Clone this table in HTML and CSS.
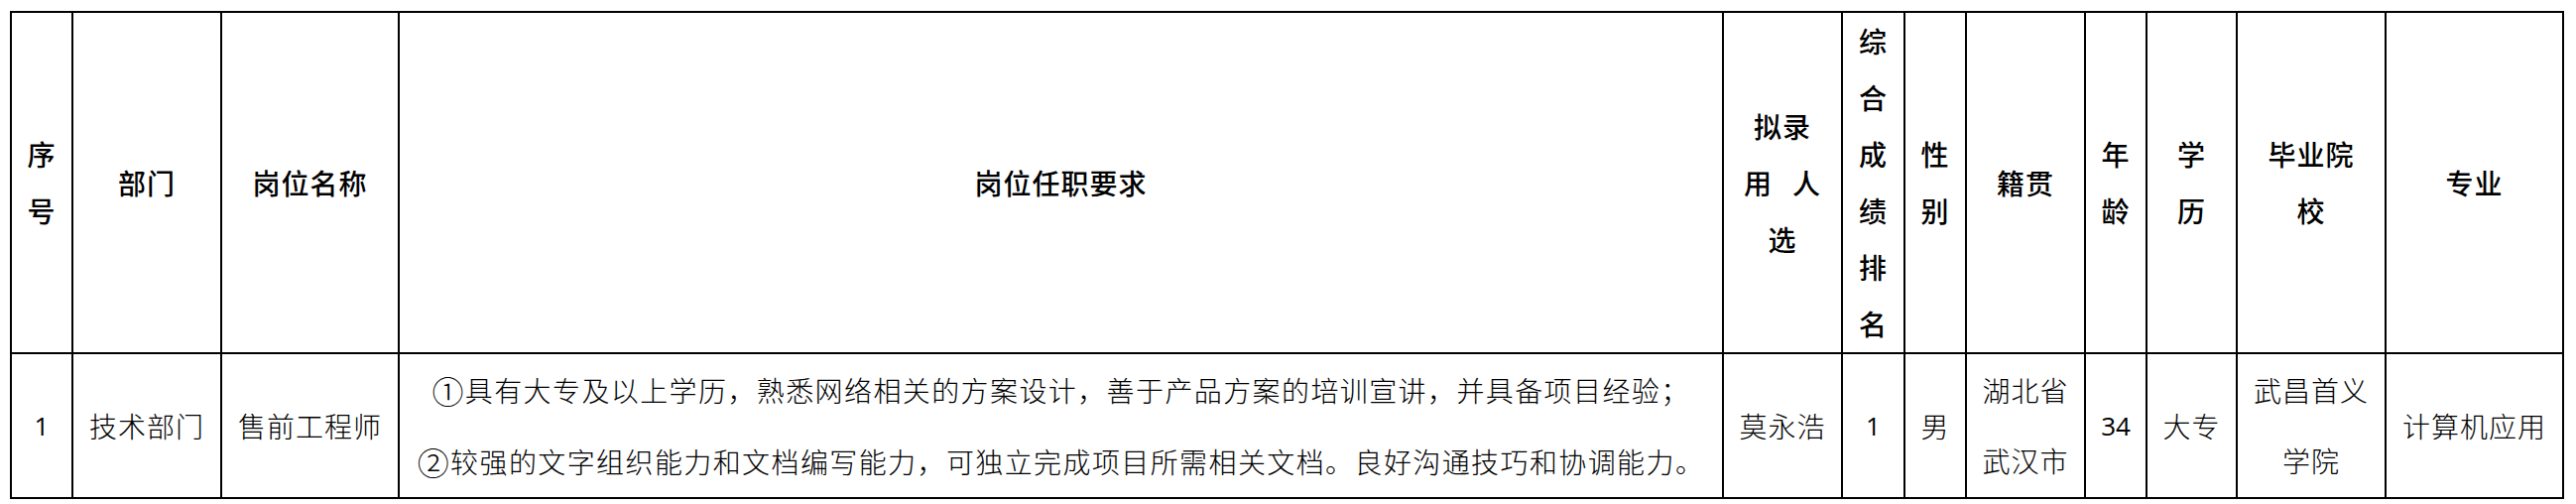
FILE: index.html
```html
<!DOCTYPE html>
<html lang="zh-CN">
<head>
<meta charset="utf-8">
<title>拟录用人员公示</title>
<link rel="stylesheet" href="styles.css">
</head>
<body>
<table class="sheet">
  <colgroup>
    <col class="c-no">
    <col class="c-dept">
    <col class="c-post">
    <col class="c-req">
    <col class="c-name">
    <col class="c-rank">
    <col class="c-sex">
    <col class="c-home">
    <col class="c-age">
    <col class="c-edu">
    <col class="c-school">
    <col class="c-major">
  </colgroup>
  <thead>
    <tr class="head">
      <th>序<br>号</th>
      <th>部门</th>
      <th>岗位名称</th>
      <th>岗位任职要求</th>
      <th>拟录<br><span class="gap">用</span>人<br>选</th>
      <th>综<br>合<br>成<br>绩<br>排<br>名</th>
      <th>性<br>别</th>
      <th>籍贯</th>
      <th>年<br>龄</th>
      <th>学<br>历</th>
      <th>毕业院<br>校</th>
      <th>专业</th>
    </tr>
  </thead>
  <tbody>
    <tr class="row">
      <td class="num">1</td>
      <td>技术部门</td>
      <td>售前工程师</td>
      <td class="req"><span class="mark">①</span>具有大专及以上学历，熟悉网络相关的方案设计，善于产品方案的培训宣讲，并具备项目经验；<br><span class="mark">②</span>较强的文字组织能力和文档编写能力，可独立完成项目所需相关文档。良好沟通技巧和协调能力。</td>
      <td>莫永浩</td>
      <td class="num">1</td>
      <td>男</td>
      <td>湖北省<br>武汉市</td>
      <td class="num">34</td>
      <td>大专</td>
      <td>武昌首义<br>学院</td>
      <td>计算机应用</td>
    </tr>
  </tbody>
</table>
</body>
</html>
```

FILE: styles.css
```css
html, body {
  background: #ffffff;
}

body {
  margin: 0;
  padding: 11px 0 0 10px;
  color: #000000;
  font-family: "Noto Sans CJK SC", "Noto Sans", sans-serif;
}

.sheet {
  border-collapse: collapse;
  table-layout: fixed;
  width: 2575px;
}

.c-no { width: 62px; }
.c-dept { width: 150px; }
.c-post { width: 179px; }
.c-req { width: 1335px; }
.c-name { width: 120px; }
.c-rank { width: 63px; }
.c-sex { width: 62px; }
.c-home { width: 120px; }
.c-age { width: 62px; }
.c-edu { width: 91px; }
.c-school { width: 150px; }
.c-major { width: 179px; }

.sheet th,
.sheet td {
  border: 2px solid #000000;
  padding: 0;
  text-align: center;
  vertical-align: middle;
  font-size: 28px;
  white-space: nowrap;
}

.head th {
  height: 342px;
  line-height: 57px;
  font-weight: 500;
  letter-spacing: 1px;
}

.row td {
  height: 141px;
  line-height: 71px;
  font-weight: 300;
  letter-spacing: 1px;
}

.row td.req {
  line-height: 72px;
  letter-spacing: 1.4px;
}

.mark {
  display: inline-block;
  font-size: 32px;
  line-height: 1;
  vertical-align: -2px;
}

.row td.num {
  font-family: "Open Sans", "Liberation Sans", sans-serif;
  font-size: 26px;
  font-weight: 400;
  letter-spacing: 0;
}

.gap {
  margin-right: 20px;
}
```
